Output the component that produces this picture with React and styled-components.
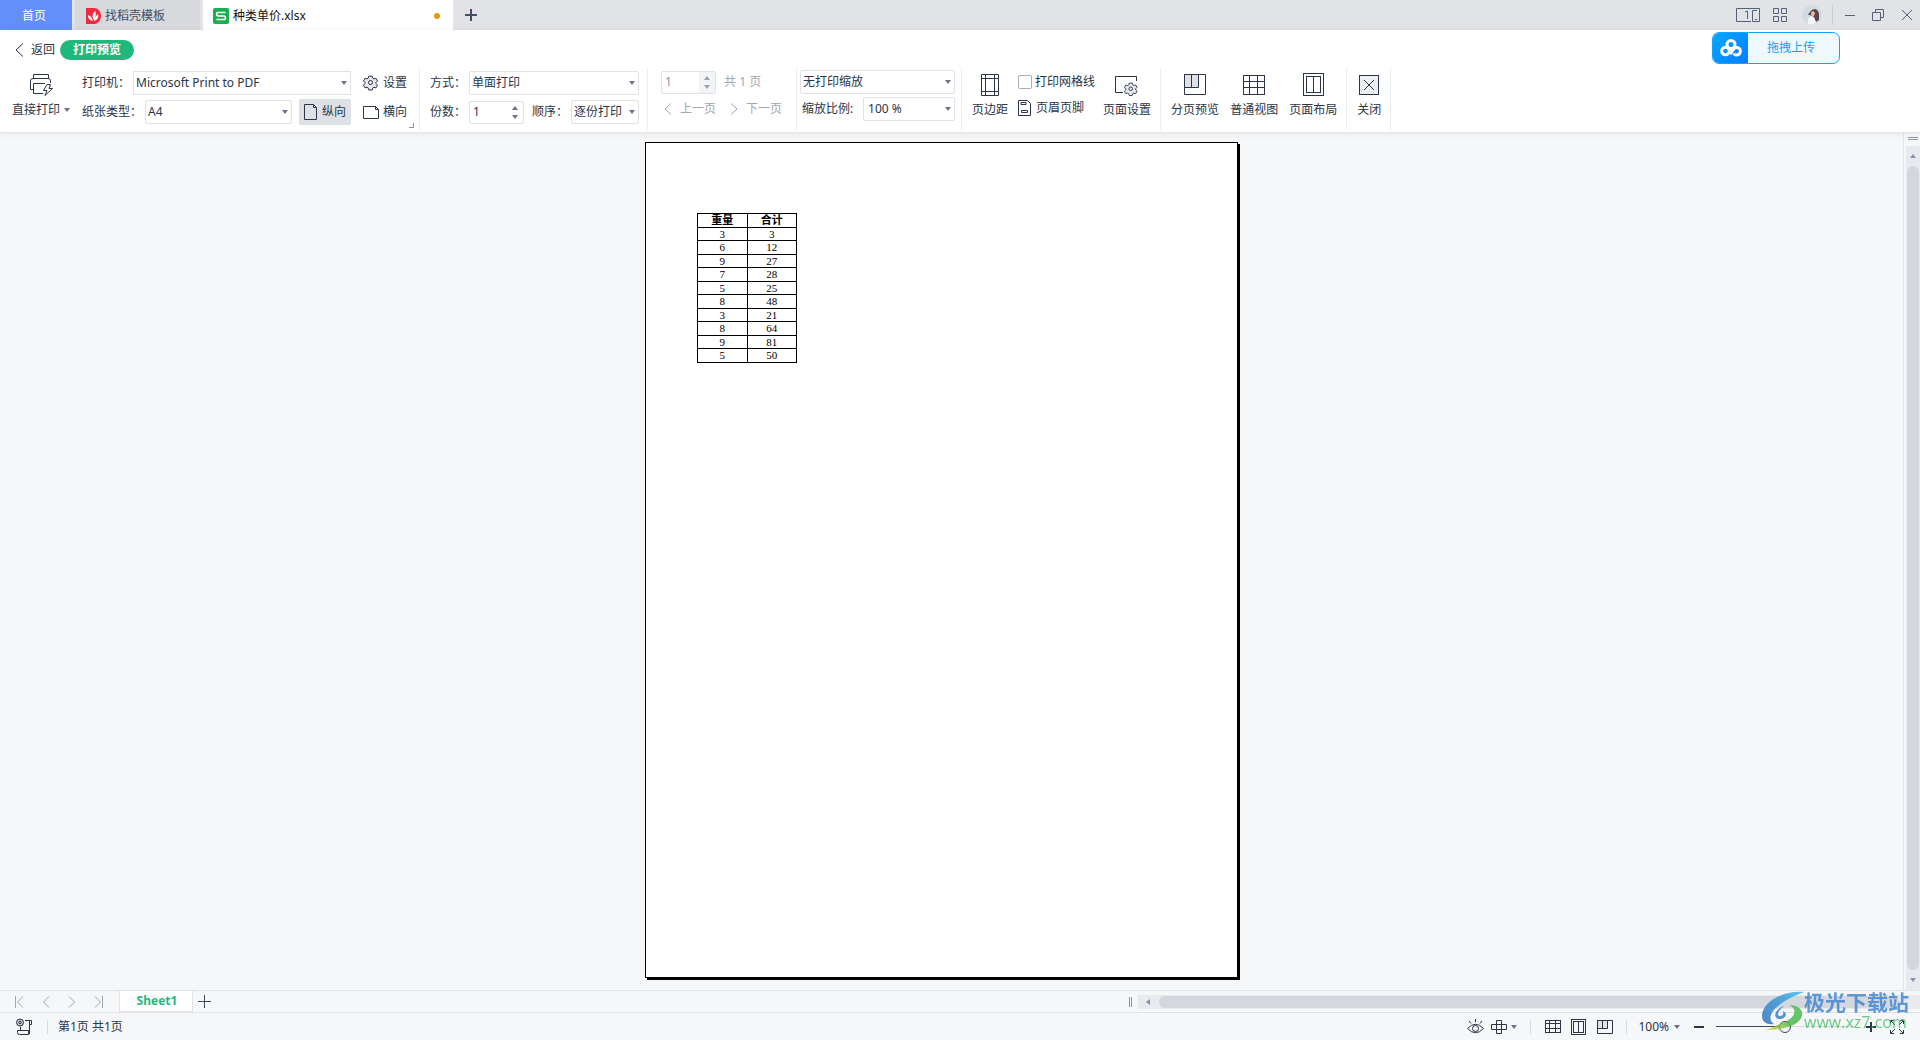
import React from "react";
import styled, { createGlobalStyle } from "styled-components";

const ink = "#2b3547";
const line = "#e0e2e8";
const muted = "#a3a6ad";

const Global = createGlobalStyle`
  * { box-sizing: border-box; }
  html, body, #root { height: 100%; }
  body { margin: 0; overflow: hidden; background: #f5f7f9; }
  body, button, input, select, table {
    font-family: "Noto Sans", "Noto Sans CJK SC", sans-serif;
    font-size: 12px;
    line-height: 16px;
    color: ${ink};
  }
  button { border: 0; padding: 0; background: none; white-space: nowrap; }
`;

const Shell = styled.div`
  height: 100vh;
  display: flex;
  flex-direction: column;
`;

const Glyph = styled.svg`
  display: block;
  flex: none;
  fill: none;
  stroke: ${(p) => p.$color || ink};
  stroke-width: ${(p) => p.$weight || 1};
`;

const Icon = ({ w, h = w, color, weight, children }) => (
  <Glyph width={w} height={h} viewBox={`0 0 ${w} ${h}`} $color={color} $weight={weight} aria-hidden="true">
    {children}
  </Glyph>
);

/* ---------- title bar ---------- */
const TitleBar = styled.header`
  flex: none;
  height: 30px;
  display: flex;
  align-items: stretch;
  background: #e2e3e7;
`;
const HomeTab = styled.button`
  width: 72px;
  margin-right: 3px;
  padding: 2px 4px 0 0;
  background: #638ffd;
  color: #fff;
`;
const FileTab = styled.button`
  display: flex;
  align-items: center;
  gap: 4px;
  width: ${(p) => (p.$active ? 250 : 125)}px;
  margin-right: ${(p) => (p.$active ? 0 : 3)}px;
  padding: 2px 13px 0 ${(p) => (p.$active ? 10 : 11)}px;
  background: ${(p) => (p.$active ? "#fff" : "#d8d9dc")};
  color: ${(p) => (p.$active ? "#111" : "#444d5f")};
`;
const Unsaved = styled.span`
  width: 6px;
  height: 6px;
  margin-left: auto;
  border-radius: 50%;
  background: #e89a0c;
`;
const NewTab = styled.button`
  display: grid;
  place-items: center;
  width: 36px;
`;
const WindowTools = styled.div`
  display: flex;
  align-items: center;
  margin-left: auto;
  padding-right: 8px;
`;
const ToolButton = styled.button`
  display: grid;
  place-items: center;
  margin-right: ${(p) => p.$after || 0}px;
`;
const TitleRule = styled.span`
  width: 1px;
  height: 20px;
  margin-right: 12px;
  background: #c9cbd1;
`;

/* ---------- ribbon ---------- */
const Ribbon = styled.section`
  position: relative;
  flex: none;
  background: #fff;
  border-bottom: 1px solid #e4e5e7;
  box-shadow: 0 1px 6px #00000012;
`;
const BackRow = styled.div`
  display: flex;
  align-items: center;
  height: 38px;
  padding: 1px 0 0 15px;
`;
const BackButton = styled.button`
  display: flex;
  align-items: center;
  gap: 7px;
  margin-right: 5px;
`;
const ModePill = styled.span`
  padding: 2px 13px;
  border-radius: 10px;
  background: #1fb97c;
  color: #fff;
  font-weight: 700;
`;
const UploadCard = styled.button`
  position: absolute;
  top: 2px;
  right: 80px;
  display: flex;
  align-items: stretch;
  width: 128px;
  height: 32px;
  overflow: hidden;
  border: 1px solid #14a5fb;
  border-radius: 7px;
  background: #edf8ff;
  color: #12a2fb;
`;
const UploadMark = styled.span`
  display: grid;
  place-items: center;
  width: 35px;
  background: linear-gradient(135deg, #06a7ff, #0a7dff);
`;
const UploadText = styled.span`
  flex: 1;
  align-self: center;
  padding-right: 5px;
`;

const Tools = styled.div`
  display: flex;
  height: 64px;
  padding: 0 0 2px 12px;
`;
const Group = styled.div`
  position: relative;
  display: flex;
  flex: none;
  gap: ${(p) => p.$gap || 0}px;
  padding: ${(p) => p.$pad};
  border-right: 1px solid #eceef1;
`;
const Rows = styled.div`
  display: flex;
  flex-direction: column;
  gap: ${(p) => p.$gap || 5}px;
`;
const Row = styled.div`
  display: flex;
  align-items: center;
  height: 24px;
  gap: ${(p) => p.$gap || 0}px;
  padding-left: ${(p) => p.$inset || 0}px;
`;
const Label = styled.label`
  width: ${(p) => p.$w}px;
  padding-left: ${(p) => p.$inset || 0}px;
  white-space: nowrap;
`;
const SelectBox = styled.span`
  display: grid;
  align-items: center;
  width: ${(p) => p.$w}px;
  height: 24px;
  border: 1px solid ${line};
  border-radius: ${(p) => (p.$square ? 0 : 2)}px;
  background: #fff;
  select {
    grid-area: 1 / 1;
    appearance: none;
    width: 100%;
    height: 22px;
    padding: 0 14px 0 ${(p) => p.$inset || 2}px;
    border: 0;
    background: transparent;
  }
  svg { grid-area: 1 / 1; justify-self: end; margin-right: 3px; pointer-events: none; }
`;
const Caret = ({ up, color = "#6b7489" }) => (
  <svg width="6" height="4" viewBox="0 0 6 4" aria-hidden="true">
    <path d={up ? "M0 4L3 0L6 4Z" : "M0 0H6L3 4Z"} fill={color} />
  </svg>
);
const Combo = ({ id, value, ...rest }) => (
  <SelectBox {...rest}>
    <select id={id} aria-label={value} defaultValue={value}>
      <option>{value}</option>
    </select>
    <Caret />
  </SelectBox>
);
const SpinBox = styled.span`
  display: flex;
  width: 55px;
  height: 23px;
  border: 1px solid ${line};
  border-radius: 2px;
  background: #fff;
  input {
    flex: 1;
    min-width: 0;
    padding: 0 0 0 3px;
    border: 0;
    background: transparent;
    color: ${(p) => (p.$off ? "#8f939c" : ink)};
  }
`;
const SpinKeys = styled.span`
  display: flex;
  flex-direction: column;
  justify-content: space-between;
  align-items: center;
  width: 16px;
  padding: 4px 0;
  background: ${(p) => (p.$off ? "#f3f4f8" : "transparent")};
  svg { display: block; }
`;
const Spin = ({ id, off, label }) => (
  <SpinBox $off={off}>
    <input id={id} type="text" defaultValue="1" disabled={off} aria-label={label} />
    <SpinKeys $off={off}>
      <Caret up color={off ? "#9aa1b0" : undefined} />
      <Caret color={off ? "#9aa1b0" : undefined} />
    </SpinKeys>
  </SpinBox>
);
const BigButton = styled.button`
  display: flex;
  flex-direction: column;
  align-items: center;
  align-self: flex-start;
  gap: 6px;
  padding-top: 4px;
`;
const BigCaption = styled.span`
  display: flex;
  align-items: center;
  gap: 4px;
`;
const IconSlot = styled.span`
  display: grid;
  place-items: center;
  height: 24px;
  padding-top: 1px;
`;
const FlatButton = styled.button`
  display: flex;
  align-items: center;
  gap: 4px;
  height: 24px;
`;
const ToggledButton = styled(FlatButton)`
  width: 52px;
  height: 26px;
  padding-left: 5px;
  border-radius: 2px;
  background: #dde1e6;
`;
const PageNav = styled.button`
  display: flex;
  align-items: center;
  gap: 8px;
  margin-right: 14px;
  color: ${muted};
`;
const Muted = styled.span`
  color: ${muted};
`;
const Corner = styled.span`
  position: absolute;
  right: 5px;
  bottom: 2px;
  width: 5px;
  height: 5px;
  border: solid #8b93a5;
  border-width: 0 1px 1px 0;
`;
const Check = styled.input`
  appearance: none;
  width: 14px;
  height: 14px;
  margin: 0 3px 0 0;
  border: 1px solid #a9adb8;
  border-radius: 2px;
  background: #fff;
`;
const OptionRows = styled.div`
  display: flex;
  flex-direction: column;
  gap: 2px;
  padding: 2px 0 0 2px;
`;
const PrinterArea = styled.div`
  display: flex;
  gap: 12px;
  padding: 3px 0 0 12px;
`;

/* ---------- work area ---------- */
const Work = styled.main`
  flex: 1;
  min-height: 0;
  display: flex;
`;
const Canvas = styled.div`
  flex: 1;
  display: flex;
  justify-content: center;
  padding: 9px 20px 12px 0;
`;
const Sheet = styled.article`
  display: flex;
  flex-direction: column;
  align-items: flex-start;
  width: 593px;
  padding: 70px 0 0 51px;
  border: 1px solid #000;
  background: #fff;
  box-shadow: 2px 2px 0 #000;
`;
const Grid = styled.table`
  border-collapse: collapse;
  table-layout: fixed;
  width: 100px;
  td, th {
    padding: 0;
    border: 1px solid #000;
    color: #000;
    font-family: "Liberation Serif", "Noto Sans CJK SC", serif;
    font-size: 11px;
    line-height: 13px;
    text-align: center;
  }
  tbody tr:nth-child(odd) td { line-height: 12px; }
`;
const VBar = styled.div`
  display: flex;
  flex-direction: column;
  width: 17px;
  padding-left: 2px;
  border-left: 1px solid ${line};
`;
const SplitV = styled.span`
  flex: none;
  height: 3px;
  margin: 4px 2px 6px;
  border: solid #8f98aa;
  border-width: 1px 0;
`;
const VTrack = styled.div`
  flex: 1;
  display: flex;
  flex-direction: column;
  align-items: center;
  background: #e8eaf0;
`;
const ArrowKey = styled.button`
  display: grid;
  place-items: center;
  width: ${(p) => p.$w || 14}px;
  height: ${(p) => p.$h || 14}px;
`;
const VThumb = styled.span`
  flex: 1;
  width: 12px;
  border-radius: 6px;
  background: #d4d7de;
`;

/* ---------- sheet tabs ---------- */
const TabsBar = styled.nav`
  flex: none;
  display: flex;
  height: 23px;
  border: solid ${line};
  border-width: 1px 0;
`;
const TabNav = styled.div`
  display: flex;
  align-items: center;
  gap: 16px;
  width: 120px;
  padding-left: 15px;
  border-right: 1px solid ${line};
`;
const SheetTab = styled.button`
  width: 73px;
  padding-left: 2px;
  background: #fff;
  border-right: 1px solid ${line};
  border-bottom: 1px solid ${line};
  color: #1fb97c;
  font-weight: 700;
`;
const AddSheet = styled.button`
  display: grid;
  place-items: center;
  width: 23px;
`;
const HScroll = styled.div`
  display: flex;
  align-items: center;
  width: 41.2%;
  margin-left: auto;
`;
const SplitH = styled.span`
  width: 3px;
  height: 10px;
  margin-right: 6px;
  border: solid #8f98aa;
  border-width: 0 1px;
`;
const HTrack = styled.div`
  flex: 1;
  display: flex;
  align-items: center;
  height: 14px;
  background: #e8eaf0;
`;
const HThumb = styled.span`
  flex: 1;
  height: 12px;
  border-radius: 6px;
  background: #d4d7de;
`;

/* ---------- status bar ---------- */
const StatusBar = styled.footer`
  flex: none;
  display: flex;
  align-items: center;
  height: 27px;
  padding: 0 16px;
`;
const StatusRule = styled.span`
  width: 1px;
  height: 14px;
  margin: 0 ${(p) => p.$right}px 0 ${(p) => p.$left}px;
  background: #d7dae0;
`;
const StatusTools = styled.div`
  display: flex;
  align-items: center;
  margin-left: auto;
`;
const ZoomCaret = styled.span`
  display: flex;
  margin: 0 14px 0 5px;
`;
const ZoomSlider = styled.input`
  appearance: none;
  width: 138px;
  height: 13px;
  margin: 0 12px;
  background: linear-gradient(90deg, #3d475c 50%, #d3d6de 50%) center / 100% 1px no-repeat;
  &::-webkit-slider-thumb {
    appearance: none;
    width: 12px;
    height: 12px;
    border: 1px solid #3d475c;
    border-radius: 50%;
    background: #f5f7f9;
  }
`;

/* ---------- site mark over the corner ---------- */
const Mark = styled.aside`
  position: fixed;
  right: 11px;
  bottom: 8px;
  display: flex;
  align-items: center;
  opacity: 0.8;
  pointer-events: none;
`;
const MarkText = styled.div`
  display: flex;
  flex-direction: column;
`;
const MarkName = styled.span`
  color: #3b82cf;
  font: 700 21px/22px "Noto Sans CJK SC", sans-serif;
`;
const MarkUrl = styled.span`
  color: #45bd68;
  font: 500 16px/20px "Open Sans", "Noto Sans", sans-serif;
`;

/* ---------- shared drawings ---------- */
const Gear = () => (
  <>
    <path
      d="M5.800 1.200h3.400l.6 2 1.200.7 2-.6 1.500 2.700-1.500 1.500v1.200l1.500 1.500-1.500 2.700-2-.6-1.200.7-.6 2H5.800l-.6-2-1.200-.7-2 .6-1.500-2.700L2 8.700V7.500L.5 6 2 3.300l2 .6 1.200-.7z"
      fill="#e6e8ec"
    />
    <circle cx="7.500" cy="7.500" r="2" />
  </>
);
const GridIcon = ({ w = 22, h = 20 }) => {
  const x = [Math.round(w / 3) - 0.5, Math.round((w * 2) / 3) - 0.5];
  const y = [Math.round(h / 3) - 0.5, Math.round((h * 2) / 3) - 0.5];
  return (
    <Icon w={w} h={h}>
      <rect x=".5" y=".5" width={w - 1} height={h - 1} />
      <path d={`M${x[0]} 0V${h}M${x[1]} 0V${h}M0 ${y[0]}H${w}M0 ${y[1]}H${w}`} />
    </Icon>
  );
};
const SplitIcon = ({ w = 22, h = 21 }) => {
  const a = Math.round(w / 3) + 0.5;
  const b = Math.round((w * 2) / 3) - 0.5;
  const c = Math.round((h * 2) / 3) - 0.5;
  return (
    <Icon w={w} h={h}>
      <path d={`M.5 .5H${b}V${c}H.5Z`} fill="#dfe1e4" />
      <path d={`M.5 .5H${w - 0.5}V${h - 0.5}H.5ZM${a} 0V${c}`} />
    </Icon>
  );
};
const LayoutIcon = ({ w = 21, h = 23, inset = 3.5 }) => (
  <Icon w={w} h={h}>
    <rect x=".5" y=".5" width={w - 1} height={h - 1} />
    <rect x={inset} y={inset} width={w - inset * 2} height={h - inset * 2} />
    <path d={`M${w / 2} ${inset}V${h - inset}`} />
  </Icon>
);
const Chevron = ({ right, end }) => (
  <Icon w={10} h={12} color={muted}>
    <path d={right ? "M2 .5L7.500 6L2 11.500" : "M8 .5L2.500 6L8 11.500"} />
    {end && <path d={right ? "M9.500 0V12" : "M.5 0V12"} />}
  </Icon>
);

const rows = [
  [3, 3], [6, 12], [9, 27], [7, 28], [5, 25],
  [8, 48], [3, 21], [8, 64], [9, 81], [5, 50],
];

export default function App() {
  return (
    <Shell>
      <Global />
      <TitleBar>
        <HomeTab>首页</HomeTab>
        <FileTab>
          <Icon w={15} h={16}>
            <path d="M0 0H8A7 8 0 0 1 8 16H0Z" fill="#f5293d" stroke="none" />
            <path d="M9 3C11 6 9 9 8 12C6 9 6 6 9 3ZM2 7C5 8 6 10 7 13C3 12 2 10 2 7ZM12 6C13 10 11 12 8 13C8 10 10 8 12 6Z" fill="#fff" stroke="none" />
          </Icon>
          找稻壳模板
        </FileTab>
        <FileTab $active>
          <Icon w={16}>
            <rect width="16" height="16" rx="2" fill="#1bac50" stroke="none" />
            <path d="M12.500 4.500H5Q3.500 4.500 3.500 6T5 8H11Q12.500 8 12.500 9.800T11 11.500H3.500" stroke="#fff" strokeWidth="1.600" />
          </Icon>
          种类单价.xlsx
          <Unsaved />
        </FileTab>
        <NewTab aria-label="+">
          <Icon w={12} color="#444d61" weight={2}><path d="M6 0V12M0 6H12" /></Icon>
        </NewTab>
        <WindowTools>
          <ToolButton $after={13}>
            <Icon w={24} h={14} color="#55607a">
              <path d="M15 13.500H.5V.5H23.500V13.500H16.500V2.500H21M9 4L11.500 3V11M19 11.500H21" />
            </Icon>
          </ToolButton>
          <ToolButton $after={15}>
            <Icon w={14} color="#55607a">
              <path d="M.5 .5h5v5h-5zM8.500 .5h5v5h-5zM.5 8.500h5v5h-5zM8.500 8.500h5v5h-5z" />
            </Icon>
          </ToolButton>
          <ToolButton $after={10}>
            <Icon w={20}>
              <circle cx="10" cy="10" r="10" fill="#d0dbe1" stroke="none" />
              <path d="M6 19Q5 12 10 11L15 17Q11 21 6 19Z" fill="#f1f5f7" stroke="none" />
              <path d="M6 10Q9 4 13 4Q17 5 17 10L17 15L14 17L12 12L8 10Z" fill="#5a4549" stroke="none" />
              <path d="M9 7Q13 5 13 9L11 12L9 10Z" fill="#e8b9a8" stroke="none" />
            </Icon>
          </ToolButton>
          <TitleRule />
          <ToolButton $after={17}><Icon w={10} h={11} color="#55607a"><path d="M0 5.500H10" /></Icon></ToolButton>
          <ToolButton $after={18}>
            <Icon w={12} color="#55607a"><path d="M.5 3.500h8v8h-8zM3.500 3.500v-3h8v8h-3" /></Icon>
          </ToolButton>
          <ToolButton><Icon w={10} color="#55607a"><path d="M0 0L10 10M10 0L0 10" /></Icon></ToolButton>
        </WindowTools>
      </TitleBar>

      <Ribbon>
        <BackRow>
          <BackButton>
            <Icon w={9} h={14}><path d="M8 .5L1 7L8 13.500" /></Icon>
            返回
          </BackButton>
          <ModePill>打印预览</ModePill>
        </BackRow>
        <UploadCard>
          <UploadMark>
            <Icon w={22} h={18} color="#fff" weight={3}>
              <circle cx="11" cy="5.500" r="4" />
              <circle cx="5.500" cy="12" r="3.800" />
              <path d="M10 15L14 9.500A3.800 3.800 0 1 1 13.500 14.500" />
            </Icon>
          </UploadMark>
          <UploadText>拖拽上传</UploadText>
        </UploadCard>

        <Tools>
          <Group $pad="0 12px 0 0">
            <BigButton>
              <Icon w={24} h={24}>
                <path d="M4.500 6V2.500H19.500V6M4 17.500H1.500V9Q1.500 6.500 4 6.500H19Q21.500 6.500 21.500 9V11M14 21.500H4.500V11.500H16" />
                <path d="M18 12.500H21.500L20 16.500H23.500L16 23.500L18 18.500H14.500Z" fill="#fff" />
              </Icon>
              <BigCaption>直接打印<Caret /></BigCaption>
            </BigButton>
            <PrinterArea>
              <Rows>
                <Row>
                  <Label $w={51} htmlFor="printer">打印机：</Label>
                  <Combo id="printer" value="Microsoft Print to PDF" $w={218} $square />
                </Row>
                <Row $gap={7}>
                  <Row>
                    <Label $w={63} htmlFor="paper">纸张类型：</Label>
                    <Combo id="paper" value="A4" $w={147} />
                  </Row>
                  <ToggledButton aria-pressed="true">
                    <Icon w={14} h={16}><path d="M.5 .5H9.500L12.500 3.500V15.500H.5ZM9.500 .5V3.500H12.500" /></Icon>
                    纵向
                  </ToggledButton>
                </Row>
              </Rows>
              <Rows>
                <FlatButton>
                  <Icon w={16}><Gear /></Icon>
                  设置
                </FlatButton>
                <FlatButton>
                  <Icon w={16} h={13}><path d="M.5 .5H12.500L15.500 3.500V12.500H.5ZM12.500 .5V3.500H15.500" /></Icon>
                  横向
                </FlatButton>
              </Rows>
            </PrinterArea>
            <Corner />
          </Group>

          <Group $pad="3px 8px 0 10px">
            <Rows>
              <Row>
                <Label $w={39} htmlFor="duplex">方式：</Label>
                <Combo id="duplex" value="单面打印" $w={170} />
              </Row>
              <Row>
                <Label $w={39} htmlFor="copies">份数：</Label>
                <Spin id="copies" />
                <Label $w={47} $inset={8} htmlFor="order">顺序：</Label>
                <Combo id="order" value="逐份打印" $w={68} />
              </Row>
            </Rows>
          </Group>

          <Group $pad="2px 0 0 13px">
            <Rows $gap={3}>
              <Row $gap={8}>
                <Spin off label="页" />
                <Muted>共 1 页</Muted>
              </Row>
              <Row $inset={3}>
                <PageNav><Icon w={8} h={12} color={muted}><path d="M7 .5L1 6L7 11.500" /></Icon>上一页</PageNav>
                <PageNav><Icon w={8} h={12} color={muted}><path d="M1 .5L7 6L1 11.500" /></Icon>下一页</PageNav>
              </Row>
            </Rows>
          </Group>

          <Group $pad="2px 6px 0 3px">
            <Rows $gap={3}>
              <Combo value="无打印缩放" $w={155} />
              <Row>
                <Label $w={63} $inset={2} htmlFor="scale">缩放比例:</Label>
                <Combo id="scale" value="100 %" $w={92} $inset={4} />
              </Row>
            </Rows>
          </Group>

          <Group $pad="0 9px 0 10px" $gap={8}>
            <BigButton>
              <Icon w={18} h={24}>
                <path d="M.5 2.500H17.500V23.500H.5ZM4.500 2V24M13.500 2V24M0 6.500H18M0 19.500H18" />
              </Icon>
              <BigCaption>页边距</BigCaption>
            </BigButton>
            <OptionRows>
              <Row>
                <Check type="checkbox" id="gridlines" />
                <label htmlFor="gridlines">打印网格线</label>
              </Row>
              <FlatButton>
                <Icon w={14} h={16}>
                  <path d="M.5 .5H9.500L12.500 3.500V15.500H.5ZM3 2.500H8V4.500H3ZM3.500 10.500H9.500V12.500H3.500Z" />
                </Icon>
                页眉页脚
              </FlatButton>
            </OptionRows>
            <BigButton>
              <Icon w={24} h={24}>
                <path d="M8 20.500H.5V4.500H21.500V9" />
                <g transform="translate(9 10) scale(.9)"><Gear /></g>
              </Icon>
              <BigCaption>页面设置</BigCaption>
            </BigButton>
          </Group>

          <Group $pad="0 9px 0 10px" $gap={11}>
            <BigButton><IconSlot><SplitIcon /></IconSlot><BigCaption>分页预览</BigCaption></BigButton>
            <BigButton><IconSlot><GridIcon /></IconSlot><BigCaption>普通视图</BigCaption></BigButton>
            <BigButton><IconSlot><LayoutIcon /></IconSlot><BigCaption>页面布局</BigCaption></BigButton>
          </Group>

          <Group $pad="0 9px 0 10px">
            <BigButton>
              <IconSlot>
                <Icon w={20}>
                  <rect x=".5" y=".5" width="19" height="19" fill="#eff0f2" />
                  <path d="M5 5L15 15M15 5L5 15" />
                </Icon>
              </IconSlot>
              <BigCaption>关闭</BigCaption>
            </BigButton>
          </Group>
        </Tools>
      </Ribbon>

      <Work>
        <Canvas>
          <Sheet>
            <Grid>
              <thead><tr><th>重量</th><th>合计</th></tr></thead>
              <tbody>
                {rows.map(([qty, sum], i) => (
                  <tr key={i}><td>{qty}</td><td>{sum}</td></tr>
                ))}
              </tbody>
            </Grid>
          </Sheet>
        </Canvas>
        <VBar>
          <SplitV />
          <VTrack>
            <ArrowKey $h={20}><Caret up color="#8791a8" /></ArrowKey>
            <VThumb />
            <ArrowKey $h={20}><Caret color="#8791a8" /></ArrowKey>
          </VTrack>
        </VBar>
      </Work>

      <TabsBar>
        <TabNav>
          <ToolButton><Chevron end /></ToolButton>
          <ToolButton><Chevron /></ToolButton>
          <ToolButton><Chevron right /></ToolButton>
          <ToolButton><Chevron right end /></ToolButton>
        </TabNav>
        <SheetTab>Sheet1</SheetTab>
        <AddSheet aria-label="+"><Icon w={13} color="#3d475c"><path d="M6.500 0V13M0 6.500H13" /></Icon></AddSheet>
        <HScroll>
          <SplitH />
          <HTrack>
            <ArrowKey $w={21}>
              <svg width="4" height="6" viewBox="0 0 4 6" aria-hidden="true"><path d="M4 0V6L0 3Z" fill="#8791a8" /></svg>
            </ArrowKey>
            <HThumb />
            <ArrowKey $w={21} />
          </HTrack>
        </HScroll>
      </TabsBar>

      <StatusBar>
        <Icon w={17} h={17}>
          <circle cx="4" cy="4.500" r="3.500" fill="#c9cdd3" />
          <circle cx="4" cy="4.500" r="1.200" />
          <path d="M9 2.500H15.500V6.500H14M13.500 3V16M4.500 9V12M1.500 12.500H12.500V16.500H3.500Q1.500 16.500 1.500 14.500Z" />
        </Icon>
        <StatusRule $left={14} $right={10} />
        <span>第1页 共1页</span>
        <StatusTools>
          <ToolButton $after={7}>
            <Icon w={17} h={16}>
              <path d="M.5 9.500Q8.500 1 16.500 9.500Q8.500 18 .5 9.500ZM8.500 0V3M2 2L4 4.500M15 2L13 4.500" />
              <circle cx="8.500" cy="9.500" r="3" />
            </Icon>
          </ToolButton>
          <ToolButton $after={4}>
            <Icon w={16} h={14}>
              <path d="M5.500 .5h5v13h-5zM.5 4.500h15v5h-15z" />
            </Icon>
          </ToolButton>
          <Caret />
          <StatusRule $left={13} $right={14} />
          <ToolButton $after={10}><GridIcon w={16} h={13} /></ToolButton>
          <ToolButton $after={11}><LayoutIcon w={15} h={16} inset={2.5} /></ToolButton>
          <ToolButton><SplitIcon w={16} h={14} /></ToolButton>
          <StatusRule $left={13} $right={11} />
          <span>100%</span>
          <ZoomCaret><Caret /></ZoomCaret>
          <ToolButton aria-label="-"><Icon w={10} weight={2}><path d="M0 5H10" /></Icon></ToolButton>
          <ZoomSlider type="range" aria-label="100%" min="0" max="100" defaultValue="50" />
          <ToolButton $after={14} aria-label="+"><Icon w={10} weight={2}><path d="M0 5H10M5 0V10" /></Icon></ToolButton>
          <ToolButton>
            <Icon w={14}>
              <path d="M.5 4V.5H4M10 .5H13.500V4M13.500 10V13.500H10M4 13.500H.5V10M1 1L5 5M13 1L9 5M13 13L9 9M1 13L5 9" />
            </Icon>
          </ToolButton>
        </StatusTools>
      </StatusBar>

      <Mark>
        <Glyph width="42" height="40" viewBox="0 0 42 40" aria-hidden="true">
          <defs>
            <linearGradient id="sky" x1="0" y1="1" x2="1" y2="0">
              <stop offset="0" stopColor="#2766b8" /><stop offset="1" stopColor="#35b7ee" />
            </linearGradient>
            <linearGradient id="leaf" x1="0" y1="1" x2="1" y2="0">
              <stop offset="0" stopColor="#e5d832" /><stop offset=".5" stopColor="#3fb548" /><stop offset="1" stopColor="#49ba4c" />
            </linearGradient>
          </defs>
          <path d="M42 1C20-1 0 12 0 25C0 31 5 34 12 33C4 28 8 14 42 1Z" fill="url(#sky)" stroke="none" />
          <path d="M22 15C11 19 11 29 19 28C24 27 26 22 21 20C23 25 16 27 16 23C16 20 20 17 22 15Z" fill="#2f7cc5" stroke="none" />
          <path d="M27 14C45 14 46 32 22 37Q14 39 3 39C12 37 14 34 20 32C34 27 36 18 27 14Z" fill="url(#leaf)" stroke="none" />
        </Glyph>
        <MarkText>
          <MarkName>极光下载站</MarkName>
          <MarkUrl>www.xz7.com</MarkUrl>
        </MarkText>
      </Mark>
    </Shell>
  );
}
